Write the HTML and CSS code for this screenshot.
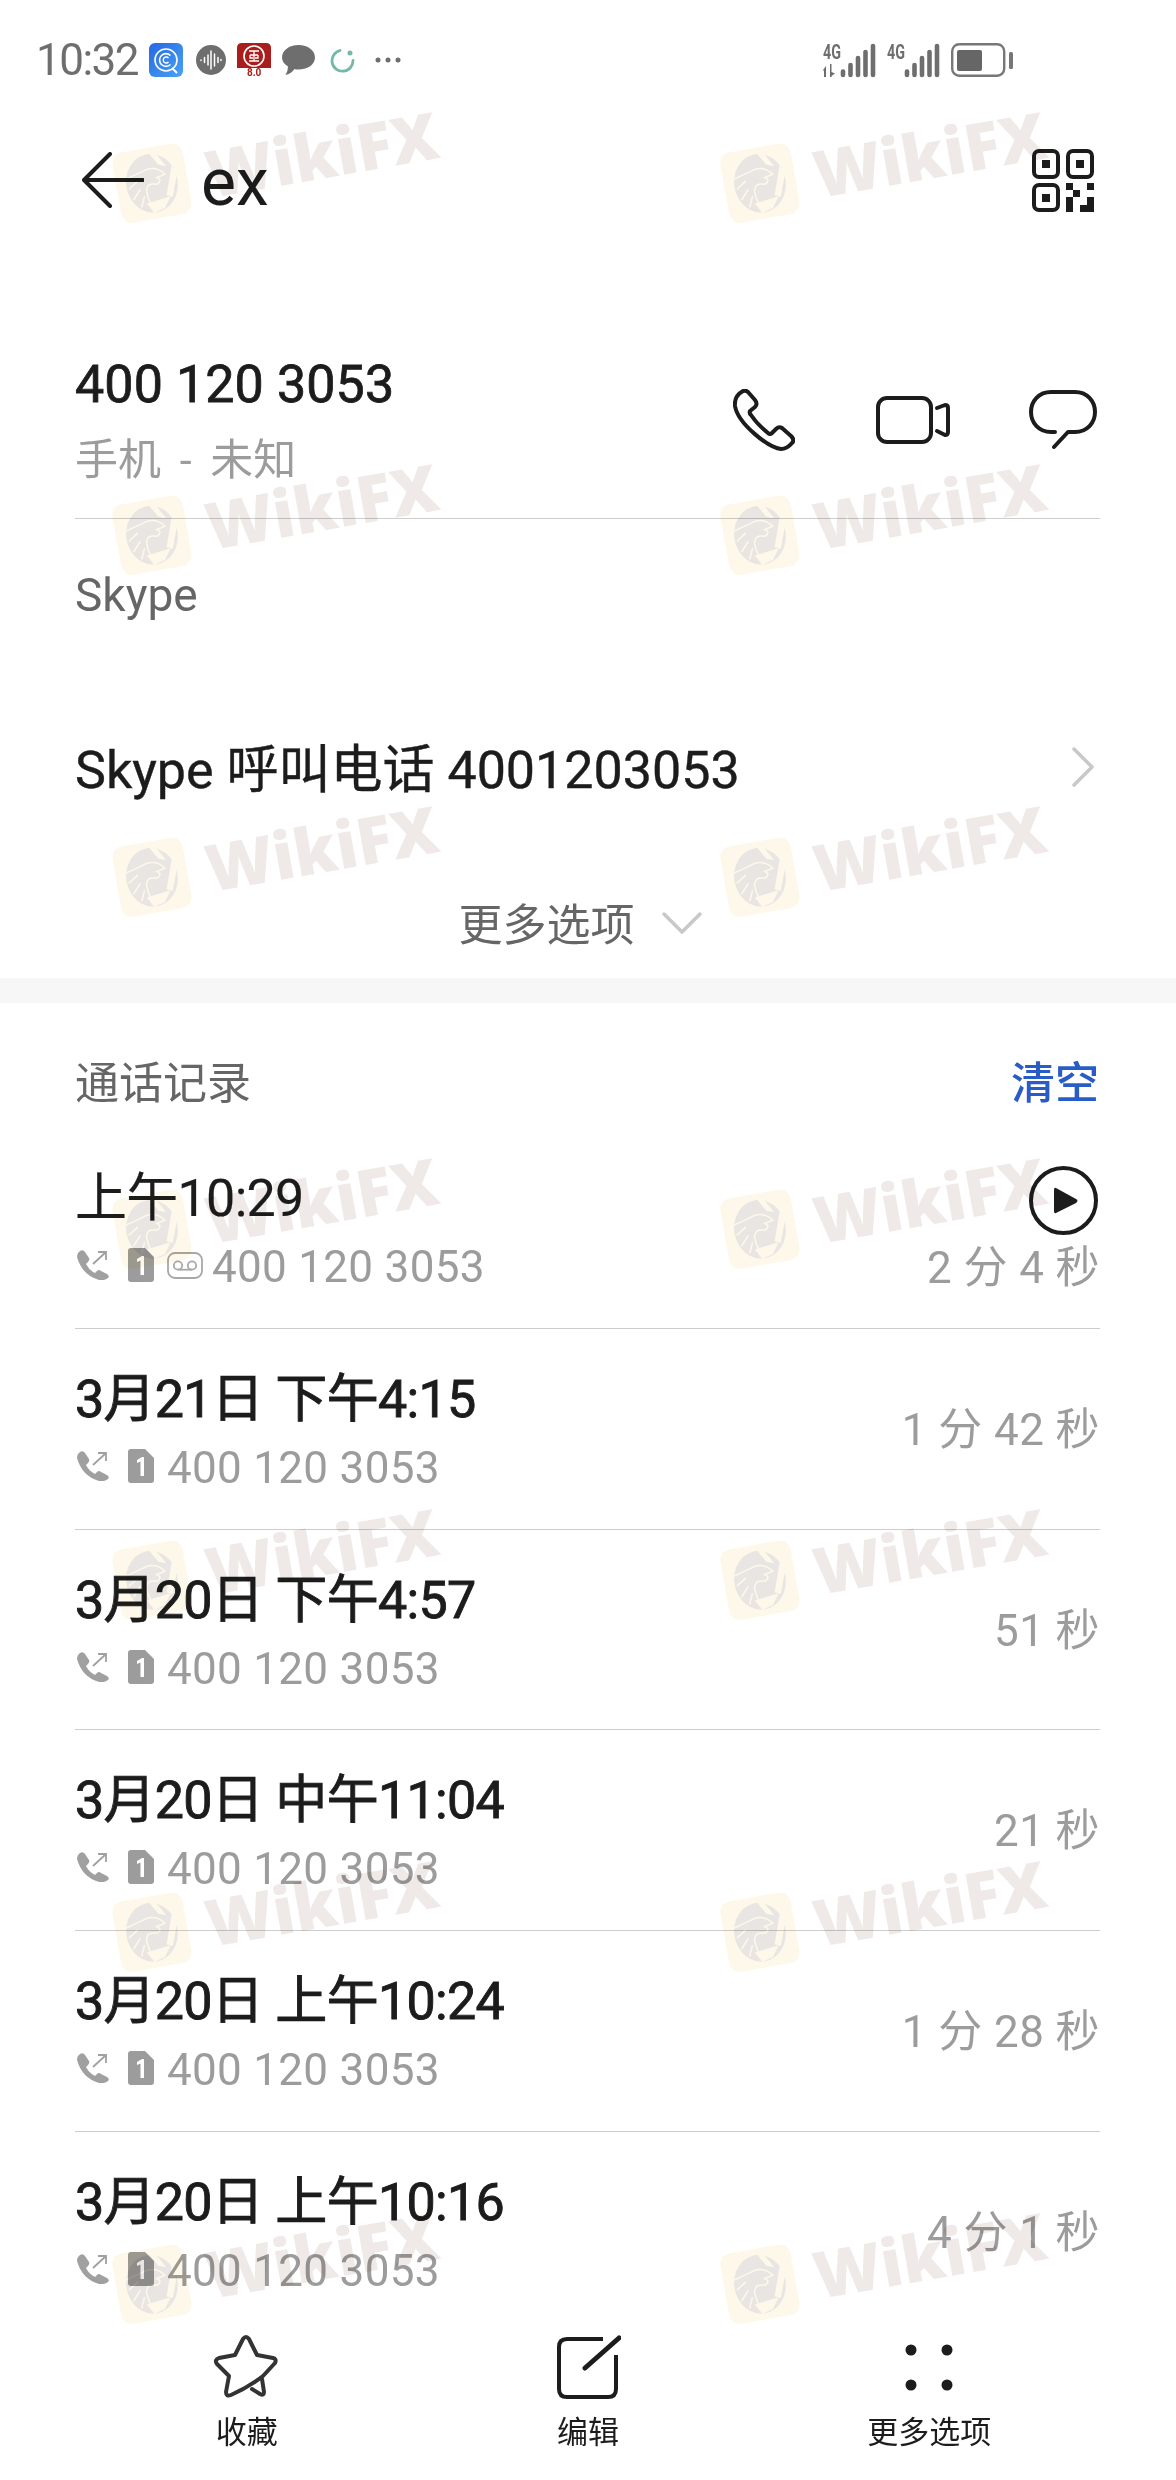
FILE: index.html
```html
<!DOCTYPE html>
<html lang="zh-CN">
<head>
    <meta charset="UTF-8">
    <meta name="viewport" content="width=device-width, initial-scale=1.0">
    <title>ex</title>
    <link rel="stylesheet" href="styles.css">
</head>
<body>
    <svg class="defs" width="0" height="0">
        <symbol id="eagle" viewBox="0 0 56 64">
            <ellipse cx="28" cy="32" rx="27" ry="31" fill="#e9e5e3"/>
            <path d="M2 23 L24 17 Q36 15 43 25 L34 27 Q40 31 33 34 Q22 30 21 40 Q21 52 28 63" fill="none" stroke="#fdf8e9" stroke-width="1.6"/>
            <path d="M3 34 L14 27 M6 46 L15 36 M13 55 L18 44" fill="none" stroke="#fdf8e9" stroke-width="1.6"/>
            <path d="M30 0 L37 1 L46 17 L38 14 Z M52 16 L56 26 L47 50 L41 47 Z M19 52 L45 49 L37 60 L25 63 Z" fill="#fdf8e9"/>
        </symbol>
        <symbol id="mark-logo" viewBox="0 0 80 80">
            <rect x="6" y="6" width="68" height="68" rx="10" fill="#fdf8e9"/>
            <use href="#eagle" x="13" y="11" width="54" height="58"/>
        </symbol>
        <symbol id="outgoing" viewBox="0 0 33 30">
            <path d="M3 1 Q6 -1 8 2 L12 8 Q13 10 11 12 L9 14 Q12 20 18 23 L20 21 Q22 19 24 21 L30 24 Q33 26 31 28 Q27 31 22 30 Q5 25 0 7 Q0 3 3 1 Z" fill="#a0a0a0"/>
            <path d="M16 14 L29 2 M21 2 H29 V10" fill="none" stroke="#a0a0a0" stroke-width="1.8"/>
        </symbol>
        <symbol id="sim" viewBox="0 0 26 34">
            <path d="M3 0 H17 L26 9 V31 Q26 34 23 34 H3 Q0 34 0 31 V3 Q0 0 3 0 Z" fill="#9c9c9c"/>
            <path d="M9 11 L14 8 H16 V27 H12.5 V12.5 L9 14 Z" fill="#fff"/>
        </symbol>
    </svg>

    <div class="page">
        <div class="status">
            <span class="clock">10:32</span>
            <svg class="s-icon app-blue" width="34" height="34" viewBox="0 0 34 34">
                <defs><linearGradient id="blueg" x1="0" y1="0" x2="1" y2="1"><stop offset="0" stop-color="#2468e4"/><stop offset="1" stop-color="#4ba2f2"/></linearGradient></defs>
                <rect width="34" height="34" rx="6" fill="url(#blueg)"/>
                <circle cx="17" cy="17" r="11" fill="none" stroke="#fff" stroke-width="1.6"/>
                <path d="M21.5 12.5 A6.4 6.4 0 1 0 21.5 21.5" fill="none" stroke="#fff" stroke-width="1.6"/>
                <path d="M19.5 15 A3 3 0 1 0 19.5 19" fill="none" stroke="#fff" stroke-width="1.4"/>
                <path d="M23 25 L28 30" stroke="#fff" stroke-width="2"/>
            </svg>
            <svg class="s-icon app-voice" width="30" height="30" viewBox="0 0 30 30">
                <circle cx="15" cy="15" r="15" fill="#6e6e6e"/>
                <path d="M5 15 V15.5 M8.5 12.5 V17.5 M12 10 V20 M15 6 V24 M18.5 9 V21 M22 12.5 V17.5 M25 14.5 V15.5" stroke="#fff" stroke-width="1.5" stroke-linecap="round"/>
            </svg>
            <div class="s-icon app-red">
                <svg width="34" height="25" viewBox="0 0 34 25">
                    <path d="M0 5 Q0 0 5 0 H29 Q34 0 34 5 V25 H0 Z" fill="#a91d1d"/>
                    <circle cx="17" cy="13" r="10" fill="none" stroke="#fff" stroke-width="1.6"/>
                    <path d="M12 8 H22 M13 12 H21 M17 8 V18 M12 18 H22 M13 12 V15 H16 M21 12 V15 H18" fill="none" stroke="#fff" stroke-width="1.3"/>
                </svg>
                <span class="app-red-text">8.0</span>
            </div>
            <svg class="s-icon app-bubble" width="33" height="30" viewBox="0 0 33 30">
                <path d="M16.5 0 C26 0 33 5.5 33 12.5 C33 19.5 26 24.5 16.5 24.5 Q14 24.5 12.5 24 Q9 29 3.5 30 Q6 26.5 6 21.5 C2 19 0 16 0 12.5 C0 5.5 7 0 16.5 0 Z" fill="#6e6e6e"/>
            </svg>
            <svg class="s-icon app-ring" width="25" height="25" viewBox="0 0 25 25">
                <path d="M10 2.5 A10.5 10.5 0 1 0 23 12.5" fill="none" stroke="#73b8a8" stroke-width="2.8" stroke-linecap="round"/>
                <circle cx="20" cy="5" r="2.5" fill="#73b8a8"/>
            </svg>
            <svg class="s-icon app-dots" width="26" height="6" viewBox="0 0 26 6">
                <circle cx="3" cy="3" r="2.5" fill="#6e6e6e"/><circle cx="13" cy="3" r="2.5" fill="#6e6e6e"/><circle cx="23" cy="3" r="2.5" fill="#6e6e6e"/>
            </svg>

            <div class="status-right">
                <svg width="53" height="49" viewBox="0 -8 53 49">
                    <text class="net" x="0" y="15" textLength="18" lengthAdjust="spacingAndGlyphs">4G</text>
                    <path d="M0 26 L3 22 V33 H1 V27 Z M7 20 H8.5 V28 L12 29.5 L8.5 32 V33 H7 Z" fill="#6e6e6e"/>
                    <path d="M20 27.5 V31 M27.5 21 V31 M35 14 V31 M42.5 8 V31 M50 2 V31" stroke="#6e6e6e" stroke-width="4.6" stroke-linecap="round"/>
                </svg>
                <svg width="53" height="49" viewBox="0 -8 53 49">
                    <text class="net" x="0" y="15" textLength="18" lengthAdjust="spacingAndGlyphs">4G</text>
                    <path d="M20 27.5 V31 M27.5 21 V31 M35 14 V31 M42.5 8 V31 M50 2 V31" stroke="#6e6e6e" stroke-width="4.6" stroke-linecap="round"/>
                </svg>
                <svg width="62" height="34" viewBox="0 0 62 34">
                    <rect x="1.2" y="1.2" width="52" height="31.5" rx="7" fill="none" stroke="#777" stroke-width="2.4"/>
                    <rect x="6" y="7" width="25" height="21" rx="2" fill="#666"/>
                    <rect x="58" y="9" width="4" height="17" rx="1.5" fill="#777"/>
                </svg>
            </div>
        </div>

        <div class="topbar">
            <svg width="62" height="56" viewBox="0 0 62 56">
                <path d="M61 28 H3 M28 2 L2 28 L28 54" fill="none" stroke="#1c1c1c" stroke-width="4" stroke-linecap="round" stroke-linejoin="round"/>
            </svg>
            <span class="contact-name">ex</span>
            <svg class="qr" width="62" height="63" viewBox="0 0 62 63">
                <rect x="2" y="2" width="24" height="26" rx="5" fill="none" stroke="#1c1c1c" stroke-width="4"/>
                <rect x="36" y="2" width="24" height="26" rx="5" fill="none" stroke="#1c1c1c" stroke-width="4"/>
                <rect x="2" y="36" width="24" height="25" rx="5" fill="none" stroke="#1c1c1c" stroke-width="4"/>
                <rect x="10" y="11" width="8" height="8" fill="#1c1c1c"/>
                <rect x="44" y="11" width="8" height="8" fill="#1c1c1c"/>
                <rect x="10" y="45" width="8" height="8" fill="#1c1c1c"/>
                <path d="M34 34 H41 V41 H34 Z M41 41 H48 V48 H41 Z M34 48 H41 V63 H34 Z M55 34 H62 V41 H55 Z M55 48 H62 V63 H48 V56 H55 Z" fill="#1c1c1c"/>
            </svg>
        </div>

        <div class="contact">
            <div>
                <div class="phone-number">400 120 3053</div>
                <div class="phone-type">手机 - 未知</div>
            </div>
            <div class="actions">
                <svg class="act-phone" width="62" height="62" viewBox="0 0 62 62">
                    <path d="M10 2 Q13 1 15 3 L22 11 Q25 15 22 18 L17 22 Q16 24 18 26 C22 32 30 40 35 44 Q37 46 39 44 L43 40 Q46 37 49 39 L58 47 Q62 51 59 54 Q54 60 48 60 C36 59 5 35 2 17 Q1 7 10 2 Z" fill="none" stroke="#1c1c1c" stroke-width="4" stroke-linejoin="round"/>
                </svg>
                <svg width="74" height="48" viewBox="0 0 74 48">
                    <rect x="2" y="2" width="53" height="44" rx="9" fill="none" stroke="#1c1c1c" stroke-width="4"/>
                    <path d="M61 12 L69 9 Q72 9 72 12 V36 Q72 39 69 39 L61 35" fill="none" stroke="#1c1c1c" stroke-width="4" stroke-linecap="round" stroke-linejoin="round"/>
                </svg>
                <svg width="68" height="60" viewBox="0 0 68 60">
                    <path d="M26 42 H22 C10 42 2 33 2 22 C2 11 10 2 22 2 H46 C58 2 66 11 66 22 C66 33 58 42 46 42 H39 L25 57" fill="none" stroke="#1c1c1c" stroke-width="4" stroke-linecap="round" stroke-linejoin="round"/>
                </svg>
            </div>
        </div>

        <div class="skype">
            <div class="skype-label">Skype</div>
            <div class="skype-call">
                <span>Skype 呼叫电话 4001203053</span>
                <svg class="chevron" width="24" height="42" viewBox="0 0 24 42">
                    <path d="M3 3 L21 21 L3 39" fill="none" stroke="#c8c8c8" stroke-width="3.5" stroke-linecap="round" stroke-linejoin="round"/>
                </svg>
            </div>
            <div class="more-options">
                <span>更多选项</span>
                <svg width="42" height="26" viewBox="0 0 42 26">
                    <path d="M3 4 L21 22 L39 4" fill="none" stroke="#c8c8c8" stroke-width="3.5" stroke-linecap="round" stroke-linejoin="round"/>
                </svg>
            </div>
        </div>

        <div class="band"></div>

        <div class="log-head">
            <span class="log-title">通话记录</span>
            <span class="log-clear">清空</span>
        </div>

        <div class="log-list">
            <div class="log-row">
                <div>
                    <div class="log-time log-time-plain">上午10:29</div>
                    <div class="log-sub">
                        <svg class="ic-out" width="33" height="30"><use href="#outgoing"/></svg>
                        <svg class="ic-sim" width="26" height="34"><use href="#sim"/></svg>
                        <svg class="ic-mail" width="36" height="27" viewBox="0 0 36 27">
                            <rect x="1" y="1" width="34" height="25" rx="7" fill="none" stroke="#a8a8a8" stroke-width="1.8"/>
                            <circle cx="11" cy="13.5" r="4.2" fill="none" stroke="#a8a8a8" stroke-width="1.8"/>
                            <circle cx="25" cy="13.5" r="4.2" fill="none" stroke="#a8a8a8" stroke-width="1.8"/>
                            <path d="M11 17.7 H25" stroke="#a8a8a8" stroke-width="1.8"/>
                        </svg>
                        <span>400 120 3053</span>
                    </div>
                </div>
                <div class="log-right">
                    <svg class="play" width="69" height="69" viewBox="0 0 69 69">
                        <circle cx="34.5" cy="34.5" r="32.5" fill="#fff" stroke="#1c1c1c" stroke-width="4"/>
                        <path d="M27 22 Q25 21 25 24 V45 Q25 48 27 47 L47 37 Q50 34.5 47 33 Z" fill="#1c1c1c"/>
                    </svg>
                    <span class="duration">2 分 4 秒</span>
                </div>
            </div>

            <div class="log-row">
                <div>
                    <div class="log-time">3月21日 下午4:15</div>
                    <div class="log-sub">
                        <svg class="ic-out" width="33" height="30"><use href="#outgoing"/></svg>
                        <svg class="ic-sim" width="26" height="34"><use href="#sim"/></svg>
                        <span>400 120 3053</span>
                    </div>
                </div>
                <div class="log-right"><span class="duration">1 分 42 秒</span></div>
            </div>

            <div class="log-row">
                <div>
                    <div class="log-time">3月20日 下午4:57</div>
                    <div class="log-sub">
                        <svg class="ic-out" width="33" height="30"><use href="#outgoing"/></svg>
                        <svg class="ic-sim" width="26" height="34"><use href="#sim"/></svg>
                        <span>400 120 3053</span>
                    </div>
                </div>
                <div class="log-right"><span class="duration">51 秒</span></div>
            </div>

            <div class="log-row">
                <div>
                    <div class="log-time">3月20日 中午11:04</div>
                    <div class="log-sub">
                        <svg class="ic-out" width="33" height="30"><use href="#outgoing"/></svg>
                        <svg class="ic-sim" width="26" height="34"><use href="#sim"/></svg>
                        <span>400 120 3053</span>
                    </div>
                </div>
                <div class="log-right"><span class="duration">21 秒</span></div>
            </div>

            <div class="log-row">
                <div>
                    <div class="log-time">3月20日 上午10:24</div>
                    <div class="log-sub">
                        <svg class="ic-out" width="33" height="30"><use href="#outgoing"/></svg>
                        <svg class="ic-sim" width="26" height="34"><use href="#sim"/></svg>
                        <span>400 120 3053</span>
                    </div>
                </div>
                <div class="log-right"><span class="duration">1 分 28 秒</span></div>
            </div>

            <div class="log-row">
                <div>
                    <div class="log-time">3月20日 上午10:16</div>
                    <div class="log-sub">
                        <svg class="ic-out" width="33" height="30"><use href="#outgoing"/></svg>
                        <svg class="ic-sim" width="26" height="34"><use href="#sim"/></svg>
                        <span>400 120 3053</span>
                    </div>
                </div>
                <div class="log-right"><span class="duration">4 分 1 秒</span></div>
            </div>
        </div>

        <div class="toolbar">
            <div class="tool">
                <svg class="tool-star" width="66" height="64" viewBox="0 0 66 64">
                    <path d="M50 41 L62 28 Q64 24 60 23 L44 20 L36 4 Q33 0 30 4 L22 20 L6 23 Q1 25 4 29 L16 41 L13 57 Q13 62 18 60 Q36 52 50 41 Z" fill="none" stroke="#333" stroke-width="4" stroke-linejoin="round"/>
                    <path d="M39 54 L47 59 Q51 61 51 57 L49 44" fill="none" stroke="#333" stroke-width="4" stroke-linecap="round" stroke-linejoin="round"/>
                </svg>
                <span>收藏</span>
            </div>
            <div class="tool">
                <svg width="66" height="64" viewBox="0 0 66 64">
                    <path d="M48 4 H12 Q4 4 4 12 V54 Q4 62 12 62 H53 Q61 62 61 54 V20" fill="none" stroke="#1c1c1c" stroke-width="4"/>
                    <path d="M30 33 L64 3" fill="none" stroke="#1c1c1c" stroke-width="5" stroke-linecap="round"/>
                </svg>
                <span>编辑</span>
            </div>
            <div class="tool">
                <svg width="66" height="64" viewBox="0 0 66 64">
                    <circle cx="15" cy="15" r="5.5" fill="#1c1c1c"/><circle cx="51" cy="15" r="5.5" fill="#1c1c1c"/>
                    <circle cx="15" cy="50" r="5.5" fill="#1c1c1c"/><circle cx="51" cy="50" r="5.5" fill="#1c1c1c"/>
                </svg>
                <span>更多选项</span>
            </div>
        </div>

        <!-- WikiFX watermark, sits over everything -->
        <div class="watermarks">
            <div class="mark"><svg width="84" height="84"><use href="#mark-logo"/></svg><span>WikiFX</span></div>
            <div class="mark"><svg width="84" height="84"><use href="#mark-logo"/></svg><span>WikiFX</span></div>
            <div class="mark"><svg width="84" height="84"><use href="#mark-logo"/></svg><span>WikiFX</span></div>
            <div class="mark"><svg width="84" height="84"><use href="#mark-logo"/></svg><span>WikiFX</span></div>
            <div class="mark"><svg width="84" height="84"><use href="#mark-logo"/></svg><span>WikiFX</span></div>
            <div class="mark"><svg width="84" height="84"><use href="#mark-logo"/></svg><span>WikiFX</span></div>
            <div class="mark"><svg width="84" height="84"><use href="#mark-logo"/></svg><span>WikiFX</span></div>
            <div class="mark"><svg width="84" height="84"><use href="#mark-logo"/></svg><span>WikiFX</span></div>
            <div class="mark"><svg width="84" height="84"><use href="#mark-logo"/></svg><span>WikiFX</span></div>
            <div class="mark"><svg width="84" height="84"><use href="#mark-logo"/></svg><span>WikiFX</span></div>
            <div class="mark"><svg width="84" height="84"><use href="#mark-logo"/></svg><span>WikiFX</span></div>
            <div class="mark"><svg width="84" height="84"><use href="#mark-logo"/></svg><span>WikiFX</span></div>
            <div class="mark"><svg width="84" height="84"><use href="#mark-logo"/></svg><span>WikiFX</span></div>
            <div class="mark"><svg width="84" height="84"><use href="#mark-logo"/></svg><span>WikiFX</span></div>
        </div>
    </div>
</body>
</html>
```

FILE: styles.css
```css
body {
    margin: 0;
    background-color: #fff;
    font-family: Roboto, "Noto Sans CJK SC", sans-serif;
    color: #1c1c1c;
}

.defs {
    position: absolute;
}

.page {
    position: relative;
    display: flex;
    flex-direction: column;
    width: 1176px;
    height: 2480px;
    overflow: hidden;
    background-color: #fff;
}

/* status bar */
.status {
    display: flex;
    flex: none;
    align-items: center;
    height: 120px;
    padding: 0 163px 0 36px;
    box-sizing: border-box;
}

.clock {
    font-size: 44px;
    line-height: 60px;
    letter-spacing: -1.5px;
    color: #6e6e6e;
    margin-right: 11px;
}

.s-icon {
    flex: none;
}

.app-voice {
    margin-left: 13px;
}

.app-red {
    display: flex;
    flex-direction: column;
    align-items: center;
    margin-left: 11px;
    width: 34px;
    height: 34px;
}

.app-red-text {
    font-size: 10px;
    line-height: 9px;
    font-weight: 700;
    color: #a91d1d;
}

.app-bubble {
    margin-left: 11px;
}

.app-ring {
    margin-left: 15px;
}

.app-dots {
    margin-left: 20px;
}

.status-right {
    display: flex;
    align-items: center;
    gap: 11px;
    margin-left: auto;
}

.net {
    font-family: Roboto, sans-serif;
    font-size: 21px;
    font-weight: 700;
    fill: #6e6e6e;
}

/* title bar */
.topbar {
    display: flex;
    flex: none;
    align-items: center;
    height: 120px;
    padding: 0 82px;
    box-sizing: border-box;
}

.contact-name {
    margin: 6px 0 0 57px;
    font-size: 66px;
    line-height: 80px;
}

.qr {
    margin-left: auto;
}

/* number block */
.contact {
    display: flex;
    flex: none;
    align-items: center;
    justify-content: space-between;
    margin: 0 76px 0 75px;
    padding: 113px 3px 29px 0;
    border-bottom: 1px solid #cdcdcd;
}

.phone-number {
    font-size: 52px;
    line-height: 64px;
    letter-spacing: 0.1px;
    -webkit-text-stroke: 0.8px #1c1c1c;
}

.phone-type {
    margin-top: 15px;
    margin-bottom: 1px;
    font-size: 43px;
    line-height: 56px;
    word-spacing: 8px;
    color: #9c9c9c;
}

.actions {
    display: flex;
    align-items: center;
    gap: 79px;
    margin-top: -3px;
}

.act-phone {
    margin-right: 2px;
}

/* skype block */
.skype {
    flex: none;
    padding: 46px 76px 26px 75px;
}

.skype-label {
    font-size: 46px;
    line-height: 60px;
    color: #666;
}

.skype-call {
    display: flex;
    align-items: center;
    justify-content: space-between;
    height: 100px;
    margin-top: 90px;
    padding-right: 5px;
    font-size: 52px;
    -webkit-text-stroke: 0.4px #1c1c1c;
}

.chevron {
    margin-top: 3px;
}

.more-options {
    display: flex;
    align-items: center;
    justify-content: center;
    gap: 26px;
    height: 60px;
    margin-top: 77px;
    padding-right: 14px;
    font-size: 44px;
    color: #666;
}

.more-options svg {
    margin-top: 2px;
}

.band {
    flex: none;
    height: 25px;
    background-color: #f7f7f7;
}

/* call log */
.log-head {
    display: flex;
    flex: none;
    align-items: center;
    justify-content: space-between;
    height: 60px;
    margin-top: 47px;
    padding: 0 77px 0 75px;
    font-size: 44px;
}

.log-title {
    color: #666;
}

.log-clear {
    color: #2a5cc8;
    font-weight: 500;
}

.log-list {
    flex: 1;
    margin-top: 18px;
    padding: 0 76px 0 75px;
    overflow: hidden;
}

.log-row {
    display: flex;
    justify-content: space-between;
    height: 200.75px;
    padding-top: 36px;
    box-sizing: border-box;
    border-bottom: 1px solid #cdcdcd;
}

.log-time {
    font-size: 52px;
    line-height: 70px;
    letter-spacing: -0.7px;
    -webkit-text-stroke: 0.9px #1c1c1c;
}

.log-time-plain {
    -webkit-text-stroke: 0.2px #1c1c1c;
}

.log-sub {
    display: flex;
    align-items: center;
    height: 50px;
    margin-top: 8px;
    font-size: 44px;
    letter-spacing: 0.3px;
    color: #9c9c9c;
}

.ic-out {
    flex: none;
    margin: -4px 0 0 2px;
}

.ic-sim {
    flex: none;
    margin: -4px 13px 0 18px;
}

.ic-mail {
    flex: none;
    margin: -4px 9px 0 0;
}

.log-right {
    display: flex;
    flex-direction: column;
    align-items: flex-end;
    justify-content: center;
    gap: 8px;
    height: 202px;
    margin-top: -36px;
}

.play {
    margin-right: 2px;
}

.duration {
    font-size: 44px;
    line-height: 50px;
    letter-spacing: 0.4px;
    color: #9c9c9c;
}

/* bottom actions */
.toolbar {
    display: flex;
    flex: none;
    height: 170px;
    padding: 25px 76px 0;
    box-sizing: border-box;
    background-color: #fff;
}

.tool {
    display: flex;
    flex: 1;
    flex-direction: column;
    align-items: center;
    gap: 12px;
    font-size: 31px;
    line-height: 44px;
}

.tool-star {
    margin-left: -2px;
}

/* watermark overlay */
.watermarks {
    position: absolute;
    top: 0;
    left: 0;
    right: 0;
    bottom: 0;
    display: grid;
    grid-template-columns: 608px 608px;
    grid-template-rows: 352px 342px repeat(5, 351.7px);
    padding: 124px 0 0 108px;
    box-sizing: border-box;
    overflow: hidden;
    pointer-events: none;
    mix-blend-mode: multiply;
}

.mark {
    display: flex;
    align-items: center;
    gap: 13px;
    width: 340px;
    height: 74px;
    transform: rotate(-10deg);
}

.mark svg {
    flex: none;
}

.mark span {
    font-family: "Open Sans", sans-serif;
    font-size: 65px;
    font-weight: 800;
    color: #efeae8;
}
```
